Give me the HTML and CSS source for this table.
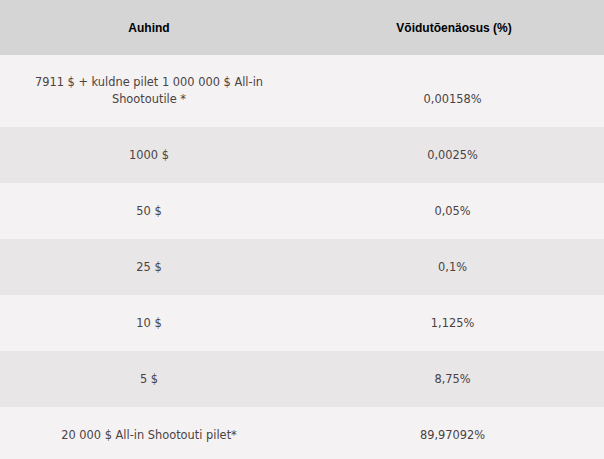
FILE: index.html
```html
<!DOCTYPE html>
<html lang="et">
<head>
<meta charset="utf-8">
<link rel="stylesheet" href="styles.css">
</head>
<body>
<table class="prizes">
  <thead>
    <tr><th class="c1">Auhind</th><th class="c2">Võidutõenäosus (%)</th></tr>
  </thead>
  <tbody>
    <tr class="first"><td class="c1">7911 $ + kuldne pilet 1 000 000 $ All-in Shootoutile *</td><td class="c2">0,00158%</td></tr>
    <tr><td class="c1">1000 $</td><td class="c2">0,0025%</td></tr>
    <tr><td class="c1">50 $</td><td class="c2">0,05%</td></tr>
    <tr><td class="c1">25 $</td><td class="c2">0,1%</td></tr>
    <tr><td class="c1">10 $</td><td class="c2">1,125%</td></tr>
    <tr><td class="c1">5 $</td><td class="c2">8,75%</td></tr>
    <tr><td class="c1">20 000 $ All-in Shootouti pilet*</td><td class="c2">89,97092%</td></tr>
  </tbody>
</table>
</body>
</html>
```
FILE: styles.css
```css
html, body {
  margin: 0;
  padding: 0;
  background: #f4f2f3;
}
.prizes {
  width: 604px;
  border-collapse: collapse;
  table-layout: fixed;
}
.prizes .c1 { width: 298px; }
.prizes th {
  height: 55px;
  padding: 0;
  background: #d5d5d5;
  font-family: "Liberation Sans", Arial, sans-serif;
  font-weight: bold;
  font-size: 12px;
  color: #000;
  text-align: center;
  vertical-align: middle;
}
.prizes th.c2 { padding-left: 6px; }
.prizes td {
  height: 56px;
  padding: 0 18px 19px;
  box-sizing: border-box;
  font-family: "DejaVu Sans", Verdana, sans-serif;
  font-size: 11.4px;
  line-height: 17px;
  color: #4a4344;
  text-align: center;
  vertical-align: bottom;
}
.prizes td.c2 { padding-left: 21px; }
.prizes tr.first td { height: 72px; }
.prizes tbody tr:nth-child(odd) { background: #f4f2f3; }
.prizes tbody tr:nth-child(even) { background: #e8e6e7; }
```
